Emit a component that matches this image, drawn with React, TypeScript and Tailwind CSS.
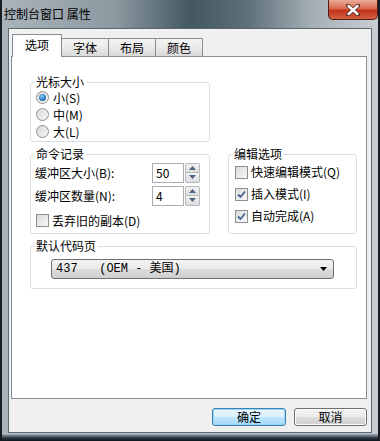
import React from "react";

const font = { fontFamily: '"Noto Sans CJK SC", "Liberation Sans", sans-serif' };

const Radio = ({ checked, label }: { checked?: boolean; label: string }) => (
  <div className="flex h-[17px] items-center">
    <span className="flex h-[13px] w-[13px] items-center justify-center rounded-full border border-[#8e8f8f] bg-[linear-gradient(135deg,#d9d9d9_0%,#f6f6f6_100%)]">
      {checked && (
        <span className="h-[7px] w-[7px] rounded-full bg-[radial-gradient(circle_at_40%_35%,#8ad0f5_0%,#2a7cc1_55%,#0f3f78_100%)]" />
      )}
    </span>
    <span className="ml-[4px] text-[12px] leading-[14px]">{label}</span>
  </div>
);

const Check = ({ checked, label, h = 22 }: { checked?: boolean; label: string; h?: number }) => (
  <div className="flex items-center" style={{ height: h }}>
    <span className="flex h-[13px] w-[13px] items-center justify-center border border-[#8e8f8f] bg-[linear-gradient(135deg,#dcdcdc_0%,#f7f7f7_100%)]">
      {checked && (
        <svg width="9" height="9" viewBox="0 0 9 9">
          <path d="M1 4.5 L3.5 7 L8 1.5" fill="none" stroke="#4a5f97" strokeWidth="1.8" />
        </svg>
      )}
    </span>
    <span className="ml-[3px] text-[12px] leading-[14px]">{label}</span>
  </div>
);

const Spin = ({ value }: { value: string }) => (
  <div className="flex h-[20px] items-stretch">
    <div className="flex w-[32px] items-center border border-[#abadb3] bg-white pl-[3px] text-[12px]">{value}</div>
    <div className="ml-[1px] flex w-[15px] flex-col">
      <div className="flex flex-1 items-center justify-center rounded-t-[2px] border border-[#b6b8bb] bg-[linear-gradient(180deg,#f3f3f3,#dedede)]">
        <svg width="7" height="4" viewBox="0 0 7 4"><path d="M0 4 L3.5 0 L7 4 Z" fill="#4d6185" /></svg>
      </div>
      <div className="flex flex-1 items-center justify-center rounded-b-[2px] border border-t-0 border-[#b6b8bb] bg-[linear-gradient(180deg,#f3f3f3,#dedede)]">
        <svg width="7" height="4" viewBox="0 0 7 4"><path d="M0 0 L3.5 4 L7 0 Z" fill="#4d6185" /></svg>
      </div>
    </div>
  </div>
);

const Group = ({
  title,
  className,
  children,
}: {
  title: string;
  className: string;
  children: React.ReactNode;
}) => (
  <fieldset className={`rounded-[3px] border border-[#d5dfe5] pl-[3px] ${className}`}>
    <legend className="px-[2px] text-[12px] leading-[14px]">{title}</legend>
    {children}
  </fieldset>
);

export default function App() {
  return (
    <div
      className="flex h-[441px] w-[380px] flex-col overflow-hidden border-x-[2px] border-[#161c22] bg-[linear-gradient(90deg,#aab3ba_0%,#8c99a1_30%,#435860_50%,#5d6f78_65%,#a3adb4_82%,#c9ced2_100%)] text-black"
      style={font}
    >
      {/* title bar */}
      <div className="flex h-[28px] shrink-0 items-start justify-between">
        <span className="pl-[2px] pt-[7px] text-[12px] leading-[14px] text-black">控制台窗口 属性</span>
        <button className="flex h-[20px] w-[50px] items-center justify-center rounded-b-[5px] border border-t-0 border-[#4d2019] bg-[linear-gradient(180deg,#e9ab99_0%,#d8694a_45%,#c2331b_55%,#d4603f_100%)]">
          <svg width="14" height="12" viewBox="0 0 14 12">
            <path d="M2 1.5 L12 10.5 M12 1.5 L2 10.5" stroke="#5a2a20" strokeWidth="4" strokeLinecap="round" />
            <path d="M2.5 2 L11.5 10 M11.5 2 L2.5 10" stroke="#ffffff" strokeWidth="2.4" strokeLinecap="round" />
          </svg>
        </button>
      </div>

      {/* client area */}
      <div className="mx-[6px] h-[405px] shrink-0 border border-[#5c6a74] bg-[#f0f0f0] pl-[2px] pr-[4px] pt-[4px]">
        {/* tabs */}
        <div className="relative z-10 flex h-[23px] items-end pl-[1px]">
          <div className="-mb-[1px] flex h-[23px] w-[50px] items-start justify-center border border-b-0 border-[#898c95] bg-white pt-[3px] text-[12px] leading-[14px]">
            选项
          </div>
          {["字体", "布局", "颜色"].map((t) => (
            <div
              key={t}
              className="-ml-[1px] flex h-[18px] w-[48px] items-start justify-center border border-b-0 border-[#898c95] bg-[linear-gradient(180deg,#f4f4f4_0%,#eaeaea_50%,#d9d9d9_100%)] pt-[2px] text-[12px] leading-[14px] first:ml-0"
            >
              {t}
            </div>
          ))}
        </div>

        {/* tab page */}
        <div className="h-[343px] w-[356px] border border-[#898c95] bg-white pl-[18px] pt-[18px]">
          <Group title="光标大小" className="h-[67px] w-[180px]">
            <div className="pl-[2px]">
              <Radio checked label="小(S)" />
              <Radio label="中(M)" />
              <Radio label="大(L)" />
            </div>
          </Group>

          <div className="mt-[5px] flex gap-[18px]">
            <Group title="命令记录" className="h-[87px] w-[180px]">
              <div className="pl-[1px]">
                <div className="flex h-[23px] items-center">
                  <span className="w-[117px] text-[12px] leading-[14px]">缓冲区大小(B):</span>
                  <Spin value="50" />
                </div>
                <div className="flex h-[23px] items-center">
                  <span className="w-[117px] text-[12px] leading-[14px]">缓冲区数量(N):</span>
                  <Spin value="4" />
                </div>
                <div className="mt-[5px] pl-[1px]">
                  <Check label="丢弃旧的副本(D)" h={17} />
                </div>
              </div>
            </Group>
            <Group title="编辑选项" className="h-[87px] w-[129px]">
              <div className="pl-[3px]">
                <Check label="快速编辑模式(Q)" />
                <Check checked label="插入模式(I)" />
                <Check checked label="自动完成(A)" />
              </div>
            </Group>
          </div>

          <Group title="默认代码页" className="mt-[5px] h-[50px] w-[327px]">
            <div className="ml-[17px] mt-[6px] flex h-[20px] w-[283px] items-center justify-between rounded-[3px] border border-[#707070] bg-[linear-gradient(180deg,#f2f2f2_0%,#ebebeb_50%,#dddddd_51%,#cfcfcf_100%)] pl-[4px] pr-[6px]">
              <span
                className="whitespace-pre text-[12px] leading-[14px]"
                style={{ fontFamily: '"Liberation Mono", "Noto Sans CJK SC", monospace' }}
              >
                {"437   (OEM - 美国)"}
              </span>
              <svg width="7" height="4" viewBox="0 0 7 4"><path d="M0 0 L7 0 L3.5 4 Z" fill="#000" /></svg>
            </div>
          </Group>
        </div>

        {/* buttons */}
        <div className="mt-[9px] flex justify-end gap-[8px]">
          <button className="h-[18px] w-[74px] rounded-[3px] border border-[#3c7fb1] bg-[linear-gradient(180deg,#eaf6fd_0%,#d9f0fc_50%,#bee6fd_51%,#a7d9f5_100%)] text-[12px] leading-[14px] shadow-[inset_0_0_0_1px_#97d8f5]">
            确定
          </button>
          <button className="h-[18px] w-[73px] rounded-[3px] border border-[#707070] bg-[linear-gradient(180deg,#f2f2f2_0%,#ebebeb_50%,#dddddd_51%,#cfcfcf_100%)] text-[12px] leading-[14px] shadow-[inset_0_0_0_1px_#fcfcfc]">
            取消
          </button>
        </div>
      </div>
      <div className="flex-1 bg-[linear-gradient(180deg,#c9d0d6_0%,#2b3945_60%,#0e141a_100%)]" />
    </div>
  );
}
